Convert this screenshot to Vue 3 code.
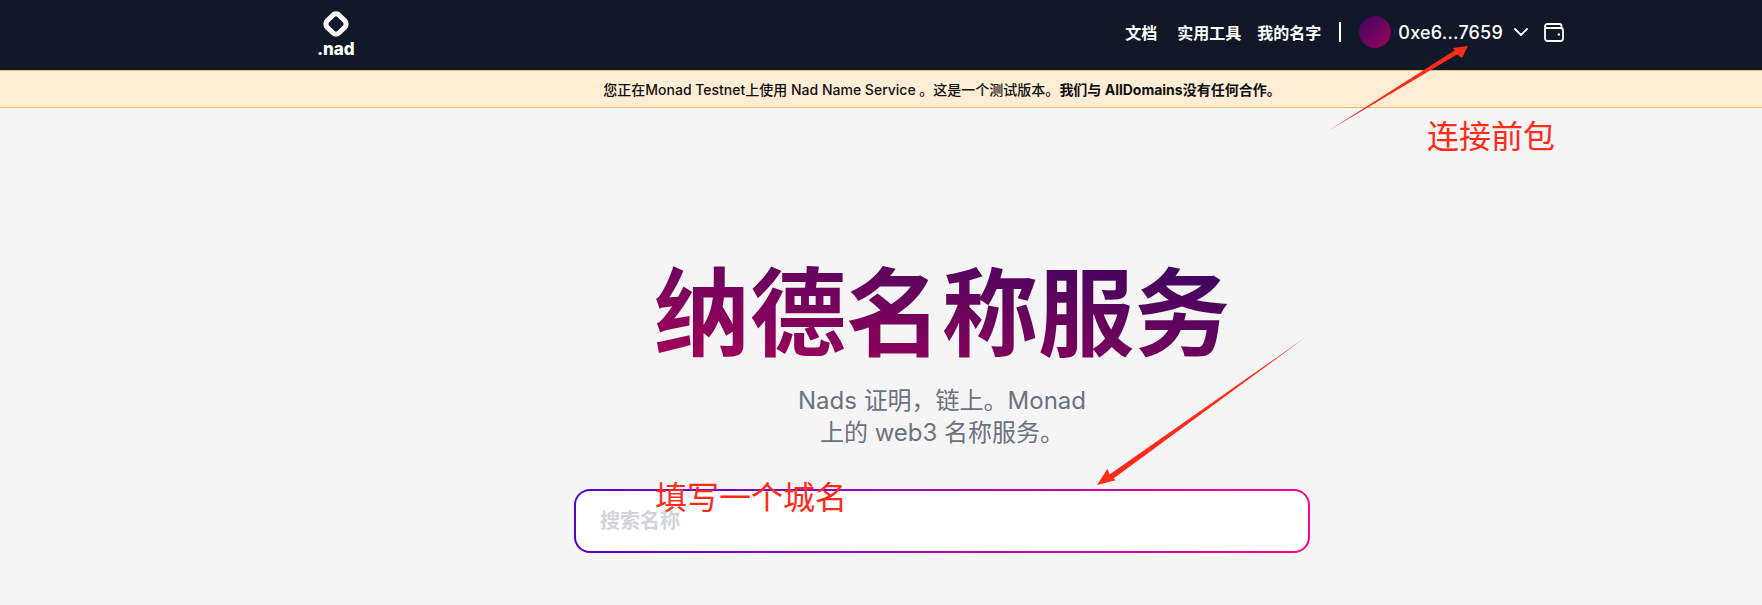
<template>
  <div class="page">
    <header class="topbar">
      <div class="topbar-inner">
        <a class="logo" href="#">
          <svg class="logo-mark" width="26" height="26" viewBox="0 0 26 26">
            <rect x="4.5" y="4.5" width="17" height="17" rx="4.5" fill="none" stroke="#fff" stroke-width="5" transform="rotate(45 13 13)" />
          </svg>
          <span class="logo-text">.nad</span>
        </a>

        <nav class="nav">
          <a class="nav-docs" href="#">文档</a>
          <a class="nav-tools" href="#">实用工具</a>
          <a class="nav-names" href="#">我的名字</a>
          <span class="divider"></span>
          <span class="avatar"></span>
          <span class="address">0xe6...7659</span>
          <svg class="chevron" width="14" height="8" viewBox="0 0 14 8">
            <path d="M1 1l6 6 6-6" fill="none" stroke="#fff" stroke-width="1.8" stroke-linecap="round" stroke-linejoin="round" />
          </svg>
          <svg class="wallet" width="20" height="19" viewBox="0 0 20 19">
            <path d="M1 4.5V15.5a2.5 2.5 0 0 0 2.5 2.5h13a2.5 2.5 0 0 0 2.5-2.5v-8a2.5 2.5 0 0 0-2.5-2.5H3.2A2.2 2.2 0 0 1 1 3.4 2.4 2.4 0 0 1 3.4 1H15.5a2 2 0 0 1 2 2v2" fill="none" stroke="#fff" stroke-width="1.8" stroke-linejoin="round" />
            <circle cx="14.8" cy="11.5" r="1.2" fill="#fff" />
          </svg>
        </nav>
      </div>
    </header>

    <div class="notice">
      <span>您正在Monad Testnet上使用 Nad Name Service 。这是一个测试版本。</span><strong>我们与 AllDomains没有任何合作。</strong>
    </div>

    <main class="hero">
      <h1 class="title">纳德名称服务</h1>
      <p class="subtitle">Nads 证明&#xFF0C;链上。Monad<br />上的 web3 名称服务。</p>
      <div class="search">
        <input class="search-input" type="text" placeholder="搜索名称" />
      </div>
    </main>

    <!-- red notes someone drew on top of the screenshot -->
    <svg class="arrows" width="1762" height="605" viewBox="0 0 1762 605">
      <polygon points="1328,131 1454.5,50.5 1453,48 1468,46 1462,58 1457,54.5" fill="#ff2a1a" />
      <polygon points="1306,337 1109.5,474.5 1107.5,468.8 1097,485 1115.7,480.2 1113.5,478.5" fill="#ff2a1a" />
    </svg>
    <span class="note note-wallet">连接前包</span>
    <span class="note note-name">填写一个城名</span>
  </div>
</template>

<script setup>
</script>

<style>
html,
body {
  margin: 0;
  overflow: hidden;
  background: #f5f5f5;
}
</style>

<style scoped>
.page {
  position: relative;
  height: 605px;
  overflow: hidden;
  background: #f5f5f5;
  font-family: Inter, "Noto Sans CJK SC", sans-serif;
}

.topbar {
  height: 70px;
  background: #111827;
}

.topbar-inner {
  height: 100%;
  padding: 0 198px 0 317px;
  display: flex;
  align-items: center;
  justify-content: space-between;
}

.logo {
  display: flex;
  flex-direction: column;
  align-items: center;
  gap: 3px;
  margin-bottom: 2px;
  color: #fff;
  text-decoration: none;
}

.logo-mark {
  display: block;
}

.logo-text {
  font-size: 17px;
  line-height: 18px;
  font-weight: 800;
}

.nav {
  display: flex;
  align-items: center;
  margin-bottom: 6px;
  color: #fff;
}

.nav a {
  color: #fff;
  text-decoration: none;
  font-size: 16px;
  font-weight: 700;
}

.nav-tools {
  margin-left: 20px;
}

.nav-names {
  margin-left: 16px;
}

.divider {
  width: 2px;
  height: 20px;
  margin-left: 18px;
  background: #fff;
}

.avatar {
  width: 32px;
  height: 32px;
  margin-left: 18px;
  border-radius: 50%;
  background: linear-gradient(135deg, #3b0764, #9d0059);
}

.address {
  margin-left: 7px;
  font-size: 18px;
  font-weight: 500;
  letter-spacing: 0.2px;
}

.chevron {
  margin-left: 11px;
}

.wallet {
  margin-left: 16px;
}

.notice {
  box-sizing: border-box;
  height: 38px;
  padding: 0 0 1px 122px;
  display: flex;
  align-items: center;
  justify-content: center;
  background: #ffedd5;
  border-top: 1px solid #fdba74;
  border-bottom: 1px solid #fdba74;
  color: #111;
  font-size: 14px;
  font-weight: 500;
}

.notice strong {
  font-weight: 700;
}

.hero {
  display: flex;
  flex-direction: column;
  align-items: center;
  padding: 153px 0 0 122px;
}

.title {
  margin: 0;
  font-size: 96px;
  line-height: 104px;
  font-weight: 700;
  background: linear-gradient(to top right, #a80059, #360560);
  -webkit-background-clip: text;
  background-clip: text;
  color: transparent;
}

.subtitle {
  margin: 20px 0 0;
  text-align: center;
  font-size: 24px;
  line-height: 32px;
  color: #6b7280;
}

.search {
  box-sizing: border-box;
  width: 736px;
  height: 64px;
  margin-top: 40px;
  border: 2px solid transparent;
  border-radius: 16px;
  background: linear-gradient(#fff, #fff) padding-box,
    linear-gradient(to right, #5500d8, #ff0090) border-box;
}

.search-input {
  box-sizing: border-box;
  display: block;
  width: 100%;
  height: 100%;
  padding: 0 24px;
  border: none;
  outline: none;
  background: transparent;
  font-family: inherit;
  font-size: 20px;
  font-weight: 700;
}

.search-input::placeholder {
  color: #d1d5db;
}

.arrows {
  position: absolute;
  left: 0;
  top: 0;
  pointer-events: none;
}

.note {
  position: absolute;
  color: #ff2a1a;
  font-size: 32px;
  line-height: 36px;
  font-family: "Noto Sans CJK SC", sans-serif;
  font-weight: 400;
}

.note-wallet {
  left: 1427px;
  top: 116px;
}

.note-name {
  left: 655px;
  top: 477px;
}
</style>
